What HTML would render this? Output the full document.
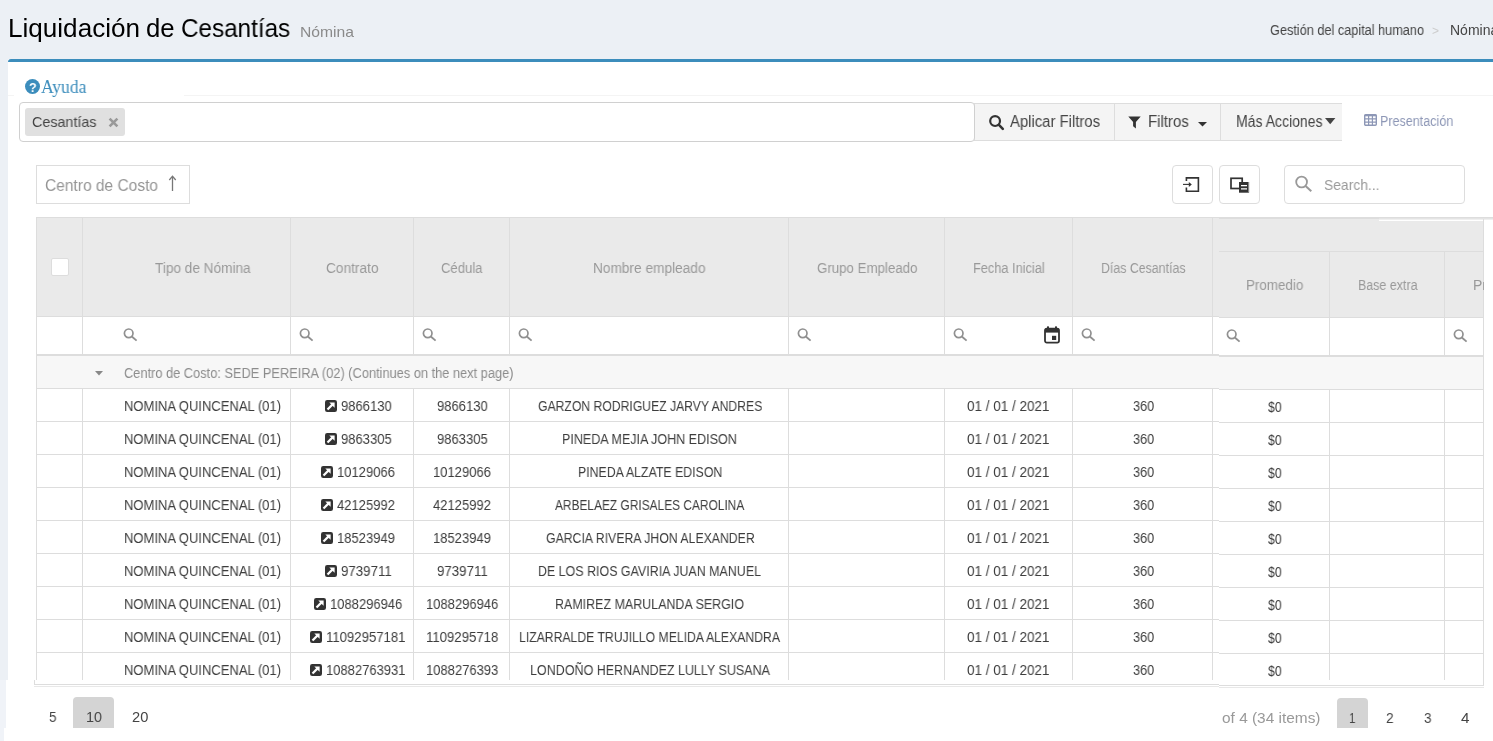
<!DOCTYPE html>
<html lang="es"><head><meta charset="utf-8"><title>Liquidación de Cesantías</title>
<style>
html,body{margin:0;padding:0;}
body{width:1493px;height:741px;overflow:hidden;background:#fff;position:relative;font-family:"Liberation Sans", sans-serif;}
.b{position:absolute;box-sizing:border-box;}
.t{position:absolute;white-space:nowrap;line-height:0;transform-origin:0 50%;will-change:transform;}
.p{display:inline-block;width:0;height:0;}
.sf{font-family:"Liberation Serif", serif;}
svg{position:absolute;overflow:visible;}
</style></head><body>
<div class="b" style="left:0px;top:0px;width:1493px;height:59px;background:#ecf0f5;"></div>
<div class="b" style="left:0px;top:59px;width:8px;height:621px;background:#ecf0f5;"></div>
<div class="b" style="left:0px;top:680px;width:6px;height:48px;background:#f0f3f8;"></div>
<div class="b" style="left:0px;top:728px;width:4px;height:13px;background:#f0f3f8;"></div>
<div class="b" style="left:8px;top:59px;width:1485px;height:3px;background:#3c8dbc;border-radius:3px 0 0 0;"></div>
<svg style="left:25px;top:79px" width="15" height="15" viewBox="0 0 15 15"><circle cx="7.5" cy="7.5" r="7.5" fill="#3c8dbc"/></svg>
<div class="b" style="left:184px;top:95px;width:1309px;height:1px;background:#f4f4f4;"></div>
<div class="b" style="left:8px;top:95px;width:6px;height:1px;background:#f4f4f4;"></div>
<div class="b" style="left:974px;top:103px;width:368px;height:38px;background:#f4f4f4;border:1px solid #ddd;border-right:none;"></div>
<div class="b" style="left:1114px;top:104px;width:1px;height:36px;background:#ddd;"></div>
<div class="b" style="left:1220px;top:104px;width:1px;height:36px;background:#ddd;"></div>
<div class="b" style="left:19px;top:102px;width:956px;height:40px;background:#fff;border:1px solid #d0d0d0;border-radius:4px;"></div>
<div class="b" style="left:25px;top:108px;width:100px;height:28px;background:#e0e0e0;border-radius:3px;"></div>
<svg style="left:108px;top:117px" width="11" height="11" viewBox="0 0 11 11"><path d="M1.6 1.6 L9.4 9.4 M9.4 1.6 L1.6 9.4" stroke="#999" stroke-width="2.6" fill="none"/></svg>
<svg style="left:989px;top:114.5px" width="15" height="15" viewBox="0 0 15 15"><circle cx="6.1" cy="6.1" r="4.9" stroke="#333" stroke-width="2.2" fill="none"/><path d="M9.9 9.9 L13.8 13.8" stroke="#333" stroke-width="2.6" stroke-linecap="round"/></svg>
<svg style="left:1128px;top:115.5px" width="13" height="13" viewBox="0 0 13 13"><path d="M0.3 0.4 H12.7 L7.9 5.9 V12.6 L5.1 10.2 V5.9 Z" fill="#333"/></svg>
<svg style="left:1198px;top:121.5px" width="9" height="5" viewBox="0 0 9 5"><path d="M0 0 H9 L4.5 4.6 Z" fill="#333"/></svg>
<svg style="left:1325px;top:118px" width="10.4" height="6.2" viewBox="0 0 10.4 6.2"><path d="M0 0 H10.4 L5.2 6.2 Z" fill="#444"/></svg>
<svg style="left:1364px;top:114px" width="13" height="12" viewBox="0 0 13 12"><rect x="0.7" y="0.7" width="11.6" height="10.6" rx="1" fill="none" stroke="#8d97b6" stroke-width="1.4"/><path d="M0.7 1.4 H12.3" stroke="#8d97b6" stroke-width="1.8"/><path d="M0.7 4.9 H12.3 M0.7 8.1 H12.3 M4.6 1 V11 M8.4 1 V11" stroke="#8d97b6" stroke-width="1.2" fill="none"/></svg>
<div class="b" style="left:36px;top:165px;width:154px;height:39px;background:#fff;border:1px solid #ddd;"></div>
<svg style="left:167px;top:175px" width="11" height="17" viewBox="0 0 11 17"><path d="M5.5 1.5 V16 M2.3 5 L5.5 1.2 L8.7 5" stroke="#777" stroke-width="1.3" fill="none"/></svg>
<div class="b" style="left:1172px;top:165px;width:41px;height:39px;background:#fff;border:1px solid #ddd;border-radius:4px;"></div>
<div class="b" style="left:1219px;top:165px;width:41px;height:39px;background:#fff;border:1px solid #ddd;border-radius:4px;"></div>
<div class="b" style="left:1284px;top:165px;width:181px;height:39px;background:#fff;border:1px solid #ddd;border-radius:4px;"></div>
<svg style="left:1182px;top:176px" width="18" height="17" viewBox="0 0 18 17"><path d="M4.4 5 V1.9 H16.4 V15.2 H4.4 V11.5" stroke="#333" stroke-width="1.6" fill="none"/><path d="M1 8.4 H8.6" stroke="#333" stroke-width="1.1"/><path d="M6.8 5.9 L9.8 8.4 L6.8 10.9 Z" fill="#333"/></svg>
<svg style="left:1229px;top:176px" width="21" height="17" viewBox="0 0 21 17"><rect x="2" y="2.3" width="11.2" height="10.2" fill="none" stroke="#333" stroke-width="1.7"/><rect x="10" y="6" width="10" height="10.7" fill="#333"/><path d="M12 9.6 H18 M12 12.9 H18" stroke="#fff" stroke-width="1.4"/><rect x="19" y="6" width="1.2" height="10.7" fill="#888"/></svg>
<svg style="left:1294px;top:175px" width="19" height="18" viewBox="0 0 19 18"><circle cx="7.6" cy="7" r="5.4" stroke="#999" stroke-width="1.8" fill="none"/><path d="M11.6 11 L17.3 16.2" stroke="#999" stroke-width="2"/></svg>
<div class="b" style="left:36px;top:217px;width:1183px;height:100px;background:#eaeaea;border:1px solid #ddd;border-right:none;"></div>
<div class="b" style="left:36px;top:317px;width:1183px;height:39px;background:#fff;border-left:1px solid #ddd;border-bottom:2px solid #ddd;"></div>
<div class="b" style="left:36px;top:356px;width:1183px;height:33px;background:#f7f7f7;border-left:1px solid #ddd;border-bottom:1px solid #ddd;"></div>
<div class="b" style="left:36px;top:389px;width:1183px;height:33px;background:#fff;border-left:1px solid #ddd;border-bottom:1px solid #ddd;"></div>
<div class="b" style="left:36px;top:422px;width:1183px;height:33px;background:#fff;border-left:1px solid #ddd;border-bottom:1px solid #ddd;"></div>
<div class="b" style="left:36px;top:455px;width:1183px;height:33px;background:#fff;border-left:1px solid #ddd;border-bottom:1px solid #ddd;"></div>
<div class="b" style="left:36px;top:488px;width:1183px;height:33px;background:#fff;border-left:1px solid #ddd;border-bottom:1px solid #ddd;"></div>
<div class="b" style="left:36px;top:521px;width:1183px;height:33px;background:#fff;border-left:1px solid #ddd;border-bottom:1px solid #ddd;"></div>
<div class="b" style="left:36px;top:554px;width:1183px;height:33px;background:#fff;border-left:1px solid #ddd;border-bottom:1px solid #ddd;"></div>
<div class="b" style="left:36px;top:587px;width:1183px;height:33px;background:#fff;border-left:1px solid #ddd;border-bottom:1px solid #ddd;"></div>
<div class="b" style="left:36px;top:620px;width:1183px;height:33px;background:#fff;border-left:1px solid #ddd;border-bottom:1px solid #ddd;"></div>
<div class="b" style="left:36px;top:653px;width:1183px;height:27px;background:#fff;border-left:1px solid #ddd;"></div>
<div class="b" style="left:82px;top:218px;width:1px;height:136px;background:#ddd;"></div>
<div class="b" style="left:82px;top:389px;width:1px;height:291px;background:#ddd;"></div>
<div class="b" style="left:290px;top:218px;width:1px;height:136px;background:#ddd;"></div>
<div class="b" style="left:290px;top:389px;width:1px;height:291px;background:#ddd;"></div>
<div class="b" style="left:413px;top:218px;width:1px;height:136px;background:#ddd;"></div>
<div class="b" style="left:413px;top:389px;width:1px;height:291px;background:#ddd;"></div>
<div class="b" style="left:509px;top:218px;width:1px;height:136px;background:#ddd;"></div>
<div class="b" style="left:509px;top:389px;width:1px;height:291px;background:#ddd;"></div>
<div class="b" style="left:788px;top:218px;width:1px;height:136px;background:#ddd;"></div>
<div class="b" style="left:788px;top:389px;width:1px;height:291px;background:#ddd;"></div>
<div class="b" style="left:944px;top:218px;width:1px;height:136px;background:#ddd;"></div>
<div class="b" style="left:944px;top:389px;width:1px;height:291px;background:#ddd;"></div>
<div class="b" style="left:1072px;top:218px;width:1px;height:136px;background:#ddd;"></div>
<div class="b" style="left:1072px;top:389px;width:1px;height:291px;background:#ddd;"></div>
<div class="b" style="left:1212px;top:218px;width:1px;height:136px;background:#ddd;"></div>
<div class="b" style="left:1212px;top:389px;width:1px;height:291px;background:#ddd;"></div>
<div class="b" style="left:51px;top:258px;width:18px;height:18px;background:#fff;border:1px solid #ddd;border-radius:2px;"></div>
<svg style="left:123px;top:328px" width="15" height="14" viewBox="0 0 15 14"><circle cx="5.7" cy="5.3" r="4.3" stroke="#909090" stroke-width="1.7" fill="none"/><path d="M8.8 8.5 L13.6 12.6" stroke="#909090" stroke-width="1.9"/></svg>
<svg style="left:299.3px;top:328px" width="15" height="14" viewBox="0 0 15 14"><circle cx="5.7" cy="5.3" r="4.3" stroke="#909090" stroke-width="1.7" fill="none"/><path d="M8.8 8.5 L13.6 12.6" stroke="#909090" stroke-width="1.9"/></svg>
<svg style="left:422px;top:328px" width="15" height="14" viewBox="0 0 15 14"><circle cx="5.7" cy="5.3" r="4.3" stroke="#909090" stroke-width="1.7" fill="none"/><path d="M8.8 8.5 L13.6 12.6" stroke="#909090" stroke-width="1.9"/></svg>
<svg style="left:518px;top:328px" width="15" height="14" viewBox="0 0 15 14"><circle cx="5.7" cy="5.3" r="4.3" stroke="#909090" stroke-width="1.7" fill="none"/><path d="M8.8 8.5 L13.6 12.6" stroke="#909090" stroke-width="1.9"/></svg>
<svg style="left:797px;top:328px" width="15" height="14" viewBox="0 0 15 14"><circle cx="5.7" cy="5.3" r="4.3" stroke="#909090" stroke-width="1.7" fill="none"/><path d="M8.8 8.5 L13.6 12.6" stroke="#909090" stroke-width="1.9"/></svg>
<svg style="left:953px;top:328px" width="15" height="14" viewBox="0 0 15 14"><circle cx="5.7" cy="5.3" r="4.3" stroke="#909090" stroke-width="1.7" fill="none"/><path d="M8.8 8.5 L13.6 12.6" stroke="#909090" stroke-width="1.9"/></svg>
<svg style="left:1081px;top:328px" width="15" height="14" viewBox="0 0 15 14"><circle cx="5.7" cy="5.3" r="4.3" stroke="#909090" stroke-width="1.7" fill="none"/><path d="M8.8 8.5 L13.6 12.6" stroke="#909090" stroke-width="1.9"/></svg>
<svg style="left:1044px;top:325.5px" width="16" height="18" viewBox="0 0 16 18"><rect x="1" y="2.6" width="14" height="14" rx="1.8" fill="none" stroke="#333" stroke-width="1.8"/><rect x="1" y="2.6" width="14" height="4" fill="#333"/><rect x="3" y="0.4" width="2" height="3" fill="#333"/><rect x="11" y="0.4" width="2" height="3" fill="#333"/><rect x="8" y="9.8" width="4.2" height="4.2" fill="#333"/></svg>
<svg style="left:95px;top:371px" width="8" height="5" viewBox="0 0 8 5"><path d="M0 0 H8 L4 4.4 Z" fill="#888"/></svg>
<svg style="left:324.77px;top:400px" width="12" height="12" viewBox="0 0 12 12"><rect width="12" height="12" rx="2.2" fill="#333"/><path d="M2.5 9.5 L7.6 4.4" stroke="#fff" stroke-width="2.2"/><path d="M4.3 2.4 H9.6 V7.7 Z" fill="#fff"/></svg>
<svg style="left:324.77px;top:433px" width="12" height="12" viewBox="0 0 12 12"><rect width="12" height="12" rx="2.2" fill="#333"/><path d="M2.5 9.5 L7.6 4.4" stroke="#fff" stroke-width="2.2"/><path d="M4.3 2.4 H9.6 V7.7 Z" fill="#fff"/></svg>
<svg style="left:321.18px;top:466px" width="12" height="12" viewBox="0 0 12 12"><rect width="12" height="12" rx="2.2" fill="#333"/><path d="M2.5 9.5 L7.6 4.4" stroke="#fff" stroke-width="2.2"/><path d="M4.3 2.4 H9.6 V7.7 Z" fill="#fff"/></svg>
<svg style="left:321.18px;top:499px" width="12" height="12" viewBox="0 0 12 12"><rect width="12" height="12" rx="2.2" fill="#333"/><path d="M2.5 9.5 L7.6 4.4" stroke="#fff" stroke-width="2.2"/><path d="M4.3 2.4 H9.6 V7.7 Z" fill="#fff"/></svg>
<svg style="left:321.18px;top:532px" width="12" height="12" viewBox="0 0 12 12"><rect width="12" height="12" rx="2.2" fill="#333"/><path d="M2.5 9.5 L7.6 4.4" stroke="#fff" stroke-width="2.2"/><path d="M4.3 2.4 H9.6 V7.7 Z" fill="#fff"/></svg>
<svg style="left:324.77px;top:565px" width="12" height="12" viewBox="0 0 12 12"><rect width="12" height="12" rx="2.2" fill="#333"/><path d="M2.5 9.5 L7.6 4.4" stroke="#fff" stroke-width="2.2"/><path d="M4.3 2.4 H9.6 V7.7 Z" fill="#fff"/></svg>
<svg style="left:313.98px;top:598px" width="12" height="12" viewBox="0 0 12 12"><rect width="12" height="12" rx="2.2" fill="#333"/><path d="M2.5 9.5 L7.6 4.4" stroke="#fff" stroke-width="2.2"/><path d="M4.3 2.4 H9.6 V7.7 Z" fill="#fff"/></svg>
<svg style="left:310.38px;top:631px" width="12" height="12" viewBox="0 0 12 12"><rect width="12" height="12" rx="2.2" fill="#333"/><path d="M2.5 9.5 L7.6 4.4" stroke="#fff" stroke-width="2.2"/><path d="M4.3 2.4 H9.6 V7.7 Z" fill="#fff"/></svg>
<svg style="left:310.38px;top:664px" width="12" height="12" viewBox="0 0 12 12"><rect width="12" height="12" rx="2.2" fill="#333"/><path d="M2.5 9.5 L7.6 4.4" stroke="#fff" stroke-width="2.2"/><path d="M4.3 2.4 H9.6 V7.7 Z" fill="#fff"/></svg>
<div class="b" style="left:34px;top:680px;width:1px;height:5px;background:#ddd;"></div>
<div class="b" style="left:34px;top:684px;width:1185px;height:1px;background:#ddd;"></div>
<div class="b" style="left:34px;top:686px;width:1185px;height:1px;background:#e8e8e8;"></div>
<div class="b" style="left:1219px;top:218px;width:265px;height:100px;background:#eaeaea;border-top:1px solid #ddd;border-right:1px solid #ddd;"></div>
<div class="b" style="left:1219px;top:217px;width:274px;height:1px;background:#ddd;"></div>
<div class="b" style="left:1379px;top:218px;width:114px;height:1px;background:#e4e4e4;"></div>
<div class="b" style="left:1379px;top:219px;width:114px;height:1px;background:#efefef;"></div>
<div class="b" style="left:1379px;top:220px;width:105px;height:1px;background:#fff;"></div>
<div class="b" style="left:1219px;top:251px;width:264px;height:1px;background:#ddd;"></div>
<div class="b" style="left:1219px;top:317px;width:264px;height:1px;background:#ddd;"></div>
<div class="b" style="left:1219px;top:318px;width:264px;height:39px;background:#fff;border-bottom:2px solid #ddd;"></div>
<div class="b" style="left:1219px;top:357px;width:264px;height:33px;background:#f7f7f7;border-bottom:1px solid #ddd;"></div>
<div class="b" style="left:1219px;top:390px;width:264px;height:33px;background:#fff;border-bottom:1px solid #ddd;"></div>
<div class="b" style="left:1219px;top:423px;width:264px;height:33px;background:#fff;border-bottom:1px solid #ddd;"></div>
<div class="b" style="left:1219px;top:456px;width:264px;height:33px;background:#fff;border-bottom:1px solid #ddd;"></div>
<div class="b" style="left:1219px;top:489px;width:264px;height:33px;background:#fff;border-bottom:1px solid #ddd;"></div>
<div class="b" style="left:1219px;top:522px;width:264px;height:33px;background:#fff;border-bottom:1px solid #ddd;"></div>
<div class="b" style="left:1219px;top:555px;width:264px;height:33px;background:#fff;border-bottom:1px solid #ddd;"></div>
<div class="b" style="left:1219px;top:588px;width:264px;height:33px;background:#fff;border-bottom:1px solid #ddd;"></div>
<div class="b" style="left:1219px;top:621px;width:264px;height:33px;background:#fff;border-bottom:1px solid #ddd;"></div>
<div class="b" style="left:1219px;top:654px;width:264px;height:30px;background:#fff;"></div>
<div class="b" style="left:1329px;top:252px;width:1px;height:103px;background:#ddd;"></div>
<div class="b" style="left:1329px;top:390px;width:1px;height:290px;background:#ddd;"></div>
<div class="b" style="left:1444px;top:252px;width:1px;height:103px;background:#ddd;"></div>
<div class="b" style="left:1444px;top:390px;width:1px;height:290px;background:#ddd;"></div>
<div class="b" style="left:1483px;top:219px;width:1px;height:461px;background:#ddd;"></div>
<svg style="left:1226.25px;top:329px" width="15" height="14" viewBox="0 0 15 14"><circle cx="5.7" cy="5.3" r="4.3" stroke="#909090" stroke-width="1.7" fill="none"/><path d="M8.8 8.5 L13.6 12.6" stroke="#909090" stroke-width="1.9"/></svg>
<svg style="left:1453.25px;top:329px" width="15" height="14" viewBox="0 0 15 14"><circle cx="5.7" cy="5.3" r="4.3" stroke="#909090" stroke-width="1.7" fill="none"/><path d="M8.8 8.5 L13.6 12.6" stroke="#909090" stroke-width="1.9"/></svg>
<div class="b" style="left:1219px;top:685px;width:265px;height:1px;background:#ddd;"></div>
<div class="b" style="left:1219px;top:687px;width:265px;height:1px;background:#e8e8e8;"></div>
<div class="b" style="left:1483px;top:680px;width:1px;height:6px;background:#ddd;"></div>
<div class="b" style="left:73px;top:697px;width:41px;height:31.4px;background:#d4d4d4;border-radius:4px 4px 0 0;"></div>
<div class="b" style="left:1337px;top:698px;width:31px;height:30.4px;background:#d4d4d4;border-radius:4px 4px 0 0;"></div>
<div class="t" style="top:28.01px;font-size:25px;color:#000;transform:scaleX(1.0435);left:8.2px;">Liquidación</div>
<div class="t" style="top:28.01px;font-size:25px;color:#000;transform:scaleX(1.0283);left:146.3px;">de</div>
<div class="t" style="top:28.01px;font-size:25px;color:#000;transform:scaleX(0.9701);left:180.8px;">Cesantías</div>
<div class="t" style="top:32.01px;font-size:15px;color:#8a8a8a;transform:scaleX(1.0447);left:300px;">Nómina</div>
<div class="t" style="top:30.01px;font-size:14px;color:#444;transform:scaleX(0.9076);left:1270px;">Gestión del capital humano</div>
<div class="t" style="top:31.01px;font-size:12px;color:#ccc;transform:scaleX(0.9978);left:1432px;">&gt;</div>
<div class="t" style="top:30.01px;font-size:14px;color:#444;left:1450.3px;">Nómina</div>
<div class="t" style="top:88.00px;font-size:13px;color:#fff;font-weight:700;transform:scaleX(0.9556);left:29.3px;">?</div>
<div class="t sf" style="top:87.02px;font-size:18px;color:#3c8dbc;transform:scaleX(0.9840);left:41.2px;">Ayuda</div>
<div class="t" style="top:122.01px;font-size:14.5px;color:#444;transform:scaleX(0.9878);left:32.3px;">Cesantías</div>
<div class="t" style="top:122.02px;font-size:15.6px;color:#444;transform:scaleX(0.9529);left:1010px;">Aplicar Filtros</div>
<div class="t" style="top:122.02px;font-size:15.6px;color:#444;transform:scaleX(0.9599);left:1147.5px;">Filtros</div>
<div class="t" style="top:122.02px;font-size:15.6px;color:#444;transform:scaleX(0.8990);left:1235.5px;">Más Acciones</div>
<div class="t" style="top:121.01px;font-size:14px;color:#8d97b6;transform:scaleX(0.8964);left:1380px;">Presentación</div>
<div class="t" style="top:186.00px;font-size:16px;color:#959595;transform:scaleX(0.9698);left:45.2px;">Centro de Costo</div>
<div class="t" style="top:185.01px;font-size:15px;color:#999;transform:scaleX(0.9245);left:1323.75px;">Search...</div>
<div class="t" style="top:268.01px;font-size:14px;color:#999;transform:scaleX(0.9724);left:155.2px;">Tipo de Nómina</div>
<div class="t" style="top:268.01px;font-size:14px;color:#999;transform:scaleX(0.9776);left:326.05px;">Contrato</div>
<div class="t" style="top:268.01px;font-size:14px;color:#999;transform:scaleX(0.9352);left:440.95px;">Cédula</div>
<div class="t" style="top:268.01px;font-size:14px;color:#999;transform:scaleX(0.9768);left:593.25px;">Nombre empleado</div>
<div class="t" style="top:268.01px;font-size:14px;color:#999;transform:scaleX(0.9495);left:816.75px;">Grupo Empleado</div>
<div class="t" style="top:268.01px;font-size:14px;color:#999;transform:scaleX(0.9129);left:973.25px;">Fecha Inicial</div>
<div class="t" style="top:268.01px;font-size:14px;color:#999;transform:scaleX(0.8828);left:1101px;">Días Cesantías</div>
<div class="t" style="top:373.01px;font-size:14px;color:#8c8c8c;transform:scaleX(0.9150);left:123.5px;">Centro de Costo: SEDE PEREIRA (02) (Continues on the next page)</div>
<div class="t" style="top:406.01px;font-size:14px;color:#3d3d3d;transform:scaleX(0.9286);left:124.4px;">NOMINA QUINCENAL (01)</div>
<div class="t" style="top:406.01px;font-size:14px;color:#3d3d3d;transform:scaleX(0.9300);left:340.525px;">9866130</div>
<div class="t" style="top:406.01px;font-size:14px;color:#3d3d3d;transform:scaleX(0.9300);left:436.85px;">9866130</div>
<div class="t" style="top:406.01px;font-size:14px;color:#3d3d3d;transform:scaleX(0.8700);left:537.5px;">GARZON RODRIGUEZ JARVY ANDRES</div>
<div class="t" style="top:406.01px;font-size:14px;color:#3d3d3d;transform:scaleX(0.9633);left:967px;">01 / 01 / 2021</div>
<div class="t" style="top:406.01px;font-size:14px;color:#3d3d3d;transform:scaleX(0.9118);left:1132.5px;">360</div>
<div class="t" style="top:439.01px;font-size:14px;color:#3d3d3d;transform:scaleX(0.9286);left:124.4px;">NOMINA QUINCENAL (01)</div>
<div class="t" style="top:439.01px;font-size:14px;color:#3d3d3d;transform:scaleX(0.9300);left:340.525px;">9863305</div>
<div class="t" style="top:439.01px;font-size:14px;color:#3d3d3d;transform:scaleX(0.9300);left:436.85px;">9863305</div>
<div class="t" style="top:439.01px;font-size:14px;color:#3d3d3d;transform:scaleX(0.8949);left:562px;">PINEDA MEJIA JOHN EDISON</div>
<div class="t" style="top:439.01px;font-size:14px;color:#3d3d3d;transform:scaleX(0.9633);left:967px;">01 / 01 / 2021</div>
<div class="t" style="top:439.01px;font-size:14px;color:#3d3d3d;transform:scaleX(0.9118);left:1132.5px;">360</div>
<div class="t" style="top:472.01px;font-size:14px;color:#3d3d3d;transform:scaleX(0.9286);left:124.4px;">NOMINA QUINCENAL (01)</div>
<div class="t" style="top:472.01px;font-size:14px;color:#3d3d3d;transform:scaleX(0.9294);left:336.925px;">10129066</div>
<div class="t" style="top:472.01px;font-size:14px;color:#3d3d3d;transform:scaleX(0.9294);left:433.25px;">10129066</div>
<div class="t" style="top:472.01px;font-size:14px;color:#3d3d3d;transform:scaleX(0.8801);left:577.5px;">PINEDA ALZATE EDISON</div>
<div class="t" style="top:472.01px;font-size:14px;color:#3d3d3d;transform:scaleX(0.9633);left:967px;">01 / 01 / 2021</div>
<div class="t" style="top:472.01px;font-size:14px;color:#3d3d3d;transform:scaleX(0.9118);left:1132.5px;">360</div>
<div class="t" style="top:505.01px;font-size:14px;color:#3d3d3d;transform:scaleX(0.9286);left:124.4px;">NOMINA QUINCENAL (01)</div>
<div class="t" style="top:505.01px;font-size:14px;color:#3d3d3d;transform:scaleX(0.9294);left:336.925px;">42125992</div>
<div class="t" style="top:505.01px;font-size:14px;color:#3d3d3d;transform:scaleX(0.9294);left:433.25px;">42125992</div>
<div class="t" style="top:505.01px;font-size:14px;color:#3d3d3d;transform:scaleX(0.8504);left:555px;">ARBELAEZ GRISALES CAROLINA</div>
<div class="t" style="top:505.01px;font-size:14px;color:#3d3d3d;transform:scaleX(0.9633);left:967px;">01 / 01 / 2021</div>
<div class="t" style="top:505.01px;font-size:14px;color:#3d3d3d;transform:scaleX(0.9118);left:1132.5px;">360</div>
<div class="t" style="top:538.01px;font-size:14px;color:#3d3d3d;transform:scaleX(0.9286);left:124.4px;">NOMINA QUINCENAL (01)</div>
<div class="t" style="top:538.01px;font-size:14px;color:#3d3d3d;transform:scaleX(0.9294);left:336.925px;">18523949</div>
<div class="t" style="top:538.01px;font-size:14px;color:#3d3d3d;transform:scaleX(0.9294);left:433.25px;">18523949</div>
<div class="t" style="top:538.01px;font-size:14px;color:#3d3d3d;transform:scaleX(0.8768);left:545.5px;">GARCIA RIVERA JHON ALEXANDER</div>
<div class="t" style="top:538.01px;font-size:14px;color:#3d3d3d;transform:scaleX(0.9633);left:967px;">01 / 01 / 2021</div>
<div class="t" style="top:538.01px;font-size:14px;color:#3d3d3d;transform:scaleX(0.9118);left:1132.5px;">360</div>
<div class="t" style="top:571.01px;font-size:14px;color:#3d3d3d;transform:scaleX(0.9286);left:124.4px;">NOMINA QUINCENAL (01)</div>
<div class="t" style="top:571.01px;font-size:14px;color:#3d3d3d;transform:scaleX(0.9482);left:340.525px;">9739711</div>
<div class="t" style="top:571.01px;font-size:14px;color:#3d3d3d;transform:scaleX(0.9482);left:436.85px;">9739711</div>
<div class="t" style="top:571.01px;font-size:14px;color:#3d3d3d;transform:scaleX(0.8883);left:538px;">DE LOS RIOS GAVIRIA JUAN MANUEL</div>
<div class="t" style="top:571.01px;font-size:14px;color:#3d3d3d;transform:scaleX(0.9633);left:967px;">01 / 01 / 2021</div>
<div class="t" style="top:571.01px;font-size:14px;color:#3d3d3d;transform:scaleX(0.9118);left:1132.5px;">360</div>
<div class="t" style="top:604.01px;font-size:14px;color:#3d3d3d;transform:scaleX(0.9286);left:124.4px;">NOMINA QUINCENAL (01)</div>
<div class="t" style="top:604.01px;font-size:14px;color:#3d3d3d;transform:scaleX(0.9284);left:329.725px;">1088296946</div>
<div class="t" style="top:604.01px;font-size:14px;color:#3d3d3d;transform:scaleX(0.9284);left:426.05px;">1088296946</div>
<div class="t" style="top:604.01px;font-size:14px;color:#3d3d3d;transform:scaleX(0.8899);left:555px;">RAMIREZ MARULANDA SERGIO</div>
<div class="t" style="top:604.01px;font-size:14px;color:#3d3d3d;transform:scaleX(0.9633);left:967px;">01 / 01 / 2021</div>
<div class="t" style="top:604.01px;font-size:14px;color:#3d3d3d;transform:scaleX(0.9118);left:1132.5px;">360</div>
<div class="t" style="top:637.01px;font-size:14px;color:#3d3d3d;transform:scaleX(0.9286);left:124.4px;">NOMINA QUINCENAL (01)</div>
<div class="t" style="top:637.01px;font-size:14px;color:#3d3d3d;transform:scaleX(0.9396);left:326.125px;">11092957181</div>
<div class="t" style="top:637.01px;font-size:14px;color:#3d3d3d;transform:scaleX(0.9411);left:426.05px;">1109295718</div>
<div class="t" style="top:637.01px;font-size:14px;color:#3d3d3d;transform:scaleX(0.8720);left:519px;">LIZARRALDE TRUJILLO MELIDA ALEXANDRA</div>
<div class="t" style="top:637.01px;font-size:14px;color:#3d3d3d;transform:scaleX(0.9633);left:967px;">01 / 01 / 2021</div>
<div class="t" style="top:637.01px;font-size:14px;color:#3d3d3d;transform:scaleX(0.9118);left:1132.5px;">360</div>
<div class="t" style="top:670.01px;font-size:14px;color:#3d3d3d;transform:scaleX(0.9286);left:124.4px;">NOMINA QUINCENAL (01)</div>
<div class="t" style="top:670.01px;font-size:14px;color:#3d3d3d;transform:scaleX(0.9281);left:326.125px;">10882763931</div>
<div class="t" style="top:670.01px;font-size:14px;color:#3d3d3d;transform:scaleX(0.9284);left:426.05px;">1088276393</div>
<div class="t" style="top:670.01px;font-size:14px;color:#3d3d3d;transform:scaleX(0.8933);left:530px;">LONDOÑO HERNANDEZ LULLY SUSANA</div>
<div class="t" style="top:670.01px;font-size:14px;color:#3d3d3d;transform:scaleX(0.9633);left:967px;">01 / 01 / 2021</div>
<div class="t" style="top:670.01px;font-size:14px;color:#3d3d3d;transform:scaleX(0.9118);left:1132.5px;">360</div>
<div class="t" style="top:285.01px;font-size:14px;color:#999;transform:scaleX(0.9554);left:1245.5px;">Promedio</div>
<div class="t" style="top:285.01px;font-size:14px;color:#999;transform:scaleX(0.8889);left:1358px;">Base extra</div>
<div class="t" style="top:285.01px;font-size:14px;color:#999;left:1473px;">Promedio</div>
<div class="t" style="top:407.01px;font-size:14px;color:#3d3d3d;transform:scaleX(0.8826);left:1267.5px;">$0</div>
<div class="t" style="top:440.01px;font-size:14px;color:#3d3d3d;transform:scaleX(0.8826);left:1267.5px;">$0</div>
<div class="t" style="top:473.01px;font-size:14px;color:#3d3d3d;transform:scaleX(0.8826);left:1267.5px;">$0</div>
<div class="t" style="top:506.01px;font-size:14px;color:#3d3d3d;transform:scaleX(0.8826);left:1267.5px;">$0</div>
<div class="t" style="top:539.01px;font-size:14px;color:#3d3d3d;transform:scaleX(0.8826);left:1267.5px;">$0</div>
<div class="t" style="top:572.01px;font-size:14px;color:#3d3d3d;transform:scaleX(0.8826);left:1267.5px;">$0</div>
<div class="t" style="top:605.01px;font-size:14px;color:#3d3d3d;transform:scaleX(0.8826);left:1267.5px;">$0</div>
<div class="t" style="top:638.01px;font-size:14px;color:#3d3d3d;transform:scaleX(0.8826);left:1267.5px;">$0</div>
<div class="t" style="top:671.01px;font-size:14px;color:#3d3d3d;transform:scaleX(0.8826);left:1267.5px;">$0</div>
<div class="t" style="top:717.01px;font-size:14.5px;color:#444;transform:scaleX(0.9284);left:48.5px;">5</div>
<div class="t" style="top:717.01px;font-size:14.5px;color:#444;transform:scaleX(0.9913);left:86.2px;">10</div>
<div class="t" style="top:717.01px;font-size:14.5px;color:#444;transform:scaleX(1.0099);left:132.3px;">20</div>
<div class="t" style="top:718.01px;font-size:14.5px;color:#999;transform:scaleX(1.0629);left:1221.7px;">of 4 (34 items)</div>
<div class="t" style="top:718.01px;font-size:14.5px;color:#444;transform:scaleX(0.8046);left:1349px;">1</div>
<div class="t" style="top:718.01px;font-size:14.5px;color:#444;transform:scaleX(0.9408);left:1386.3px;">2</div>
<div class="t" style="top:718.01px;font-size:14.5px;color:#444;transform:scaleX(0.9284);left:1424px;">3</div>
<div class="t" style="top:718.01px;font-size:14.5px;color:#444;transform:scaleX(1.0522);left:1461.2px;">4</div>
<div class="b" style="left:1484px;top:221px;width:9px;height:463px;background:#fff;"></div>
</body></html>
